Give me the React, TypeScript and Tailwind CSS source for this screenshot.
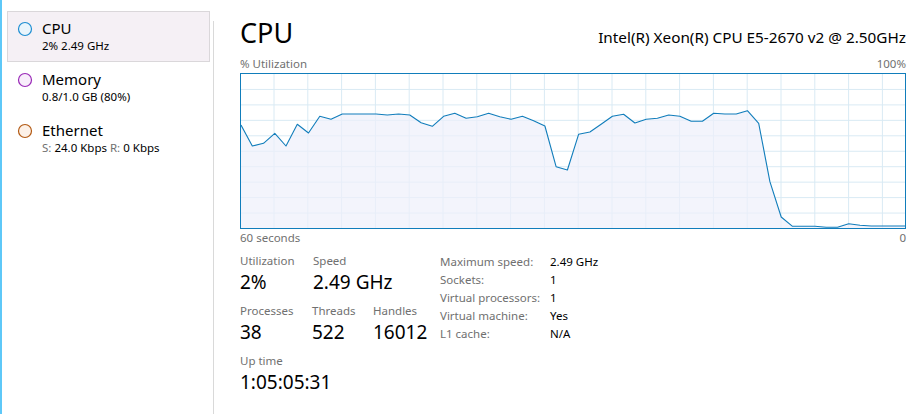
import React from "react";

const font = { fontFamily: '"Noto Sans", "Open Sans", sans-serif' };

// CPU usage history, one sample per second (y in px from graph top)
const samples = [
  125, 146, 143.3, 133.3, 146, 124.3, 133, 116.3, 119.3, 114, 114, 114, 114, 115, 114, 115, 122.7, 126.3, 116.3,
  113.3, 118.3, 116.7, 113.3, 116.7, 119.3, 116.3, 120.7, 126, 166.7, 170, 134.3, 132, 124.3, 116.3, 114.3, 123,
  119.3, 118.3, 115, 116.3, 121.3, 121.3, 113.3, 114, 114, 110.7, 123.3, 181.7, 217, 226.3, 226.3, 226.3, 227.3,
  227.3, 223.7, 225.3, 226, 226, 226, 226,
];

const W = 664;
const H = 154;

function Graph() {
  const pts = samples.map((y, i) => [(i * W) / (samples.length - 1), y - 74]);
  const line = pts.map(([x, y]) => `${x.toFixed(1)},${y.toFixed(1)}`).join(" ");
  const area = `0,${H} ${line} ${W},${H}`;
  const vlines = Array.from({ length: 19 }, (_, k) => 33 + k * 33.8);
  const hlines = Array.from({ length: 9 }, (_, k) => (k + 1) * 15.45);
  return (
    <div className="w-[666px] h-[156px] border border-[#117dbb]">
      <svg width={W} height={H} className="block">
        {vlines.map((x) => (
          <line key={"v" + x} x1={x} x2={x} y1={0} y2={H} stroke="#d9eaf4" strokeWidth={1} />
        ))}
        {hlines.map((y) => (
          <line key={"h" + y} x1={0} x2={W} y1={y} y2={y} stroke="#d9eaf4" strokeWidth={1} />
        ))}
        <polygon points={area} fill="#eef0fb" fillOpacity={0.7} />
        <polyline points={line} fill="none" stroke="#117dbb" strokeWidth={1.1} strokeLinejoin="round" />
      </svg>
    </div>
  );
}

function Circle({ stroke, fill }: { stroke: string; fill: string }) {
  return (
    <svg width="16" height="16" viewBox="0 0 16 16" className="shrink-0">
      <circle cx="8" cy="8" r="6.5" fill={fill} stroke={stroke} strokeWidth="1.2" />
    </svg>
  );
}

function SideItem({
  title,
  sub,
  stroke,
  fill,
  selected,
}: {
  title: string;
  sub: React.ReactNode;
  stroke: string;
  fill: string;
  selected?: boolean;
}) {
  return (
    <div
      className={
        "h-[51px] w-[203px] flex items-start pl-[9px] pt-[7px] border " +
        (selected ? "bg-[#f5f0f5] border-[#dad7da]" : "border-transparent")
      }
    >
      <div className="pt-[2px]">
        <Circle stroke={stroke} fill={fill} />
      </div>
      <div className="ml-[9px]">
        <div className="text-[15px] leading-[19px] text-black">{title}</div>
        <div className="text-[11.5px] leading-[15px] text-black">{sub}</div>
      </div>
    </div>
  );
}

function Stat({ label, value, w }: { label: string; value: string; w: string }) {
  return (
    <div className={w}>
      <div className="text-[11.5px] leading-[16px] text-[#707070]">{label}</div>
      <div className="text-[19px] leading-[26px] text-black">{value}</div>
    </div>
  );
}

const specs = [
  ["Maximum speed:", "2.49 GHz"],
  ["Sockets:", "1"],
  ["Virtual processors:", "1"],
  ["Virtual machine:", "Yes"],
  ["L1 cache:", "N/A"],
];

export default function App() {
  return (
    <div className="w-[921px] h-[414px] bg-white flex overflow-hidden" style={font}>
      {/* accent stripe */}
      <div className="w-[2px] h-full bg-[#5ec8f8]" />

      {/* sidebar */}
      <div className="w-[211px] pt-[11px] pl-[5px] flex flex-col">
        <SideItem title="CPU" sub="2% 2.49 GHz" stroke="#1e8ed2" fill="#eaf5fc" selected />
        <SideItem title="Memory" sub="0.8/1.0 GB (80%)" stroke="#9a2ab8" fill="#f8eefb" />
        <SideItem
          title="Ethernet"
          sub={
            <>
              <span className="text-[#707070]">S:</span> 24.0 Kbps <span className="text-[#707070]">R:</span> 0 Kbps
            </>
          }
          stroke="#b35a14"
          fill="#fcf1e8"
        />
      </div>

      {/* separator */}
      <div className="pt-[21px]">
        <div className="w-px h-full bg-[#d9d9d9]" />
      </div>

      {/* main */}
      <div className="flex-1 pl-[26px] pr-[15px]">
        <div className="w-[666px]">
          <div className="flex items-baseline justify-between pt-[15px]">
            <div className="text-[27px] leading-[36px] text-black">CPU</div>
            <div className="text-[15.3px] leading-[20px] text-black">Intel(R) Xeon(R) CPU E5-2670 v2 @ 2.50GHz</div>
          </div>
          <div className="flex justify-between mt-[5px] text-[11.5px] leading-[16px] text-[#707070]">
            <span>% Utilization</span>
            <span>100%</span>
          </div>
          <div className="mt-[1px]">
            <Graph />
          </div>
          <div className="flex justify-between mt-[1px] text-[11.5px] leading-[16px] text-[#707070]">
            <span>60 seconds</span>
            <span>0</span>
          </div>

          <div className="flex mt-[7px]">
            <div className="w-[200px] flex flex-col gap-[8px]">
              <div className="flex">
                <Stat label="Utilization" value="2%" w="w-[73px]" />
                <Stat label="Speed" value="2.49 GHz" w="w-[100px]" />
              </div>
              <div className="flex">
                <Stat label="Processes" value="38" w="w-[72px]" />
                <Stat label="Threads" value="522" w="w-[61px]" />
                <Stat label="Handles" value="16012" w="w-[60px]" />
              </div>
              <div className="flex">
                <Stat label="Up time" value="1:05:05:31" w="w-[120px]" />
              </div>
            </div>
            <div>
              {specs.map(([k, v]) => (
                <div key={k} className="flex text-[11.5px] leading-[18px]">
                  <span className="w-[110px] text-[#707070]">{k}</span>
                  <span className="text-black">{v}</span>
                </div>
              ))}
            </div>
          </div>
        </div>
      </div>
    </div>
  );
}
